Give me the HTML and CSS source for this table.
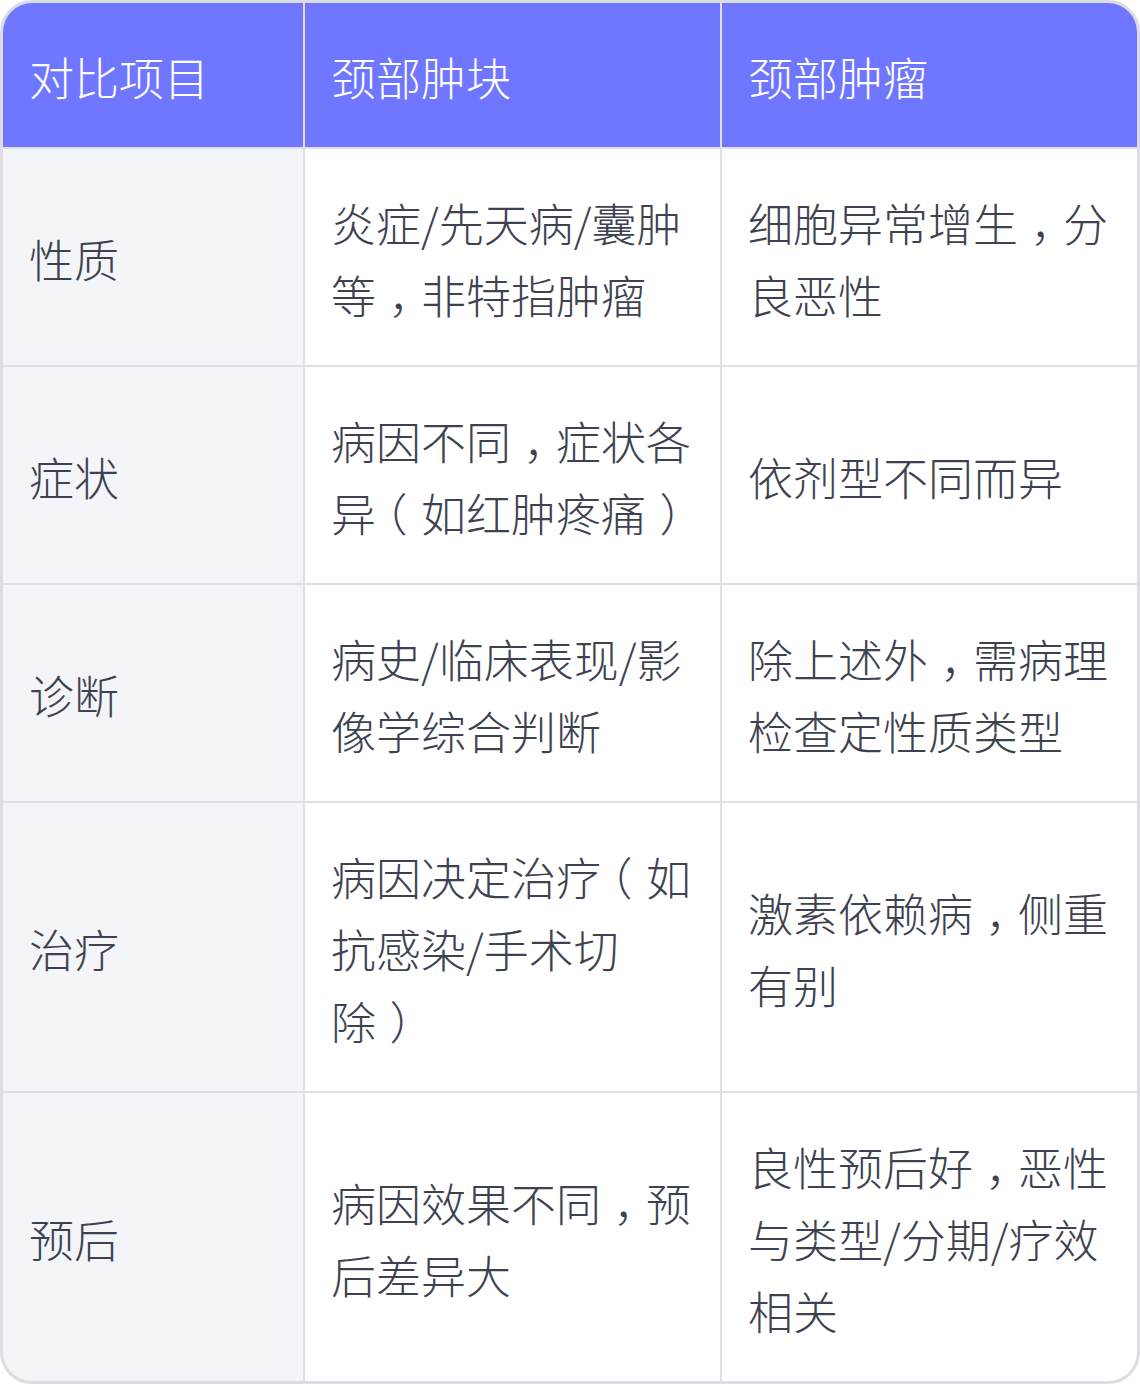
FILE: index.html
```html
<!DOCTYPE html>
<html lang="zh-CN">
<head>
<meta charset="utf-8">
<title>颈部肿块与颈部肿瘤对比</title>
<link rel="stylesheet" href="styles.css">
</head>
<body>
<div class="table">
  <div class="cell head">对比项目</div>
  <div class="cell head">颈部肿块</div>
  <div class="cell head">颈部肿瘤</div>

  <div class="cell label">性质</div>
  <div class="cell"><p class="txt">炎症/先天病/囊肿等<span class="cm">，</span>非特指肿瘤</p></div>
  <div class="cell"><p class="txt">细胞异常增生<span class="cm">，</span>分良恶性</p></div>

  <div class="cell label">症状</div>
  <div class="cell"><p class="txt">病因不同<span class="cm">，</span>症状各异<span class="lp">（</span>如红肿疼痛<span class="rp">）</span></p></div>
  <div class="cell"><p class="txt">依剂型不同而异</p></div>

  <div class="cell label">诊断</div>
  <div class="cell"><p class="txt">病史/临床表现/影像学综合判断</p></div>
  <div class="cell"><p class="txt">除上述外<span class="cm">，</span>需病理检查定性质类型</p></div>

  <div class="cell label">治疗</div>
  <div class="cell"><p class="txt">病因决定治疗<span class="lp">（</span>如抗感染/手术切除<span class="rp">）</span></p></div>
  <div class="cell"><p class="txt">激素依赖病<span class="cm">，</span>侧重有别</p></div>

  <div class="cell label">预后</div>
  <div class="cell"><p class="txt">病因效果不同<span class="cm">，</span>预后差异大</p></div>
  <div class="cell"><p class="txt">良性预后好<span class="cm">，</span>恶性与类型/分期/疗效相关</p></div>
</div>
</body>
</html>
```

FILE: styles.css
```css
html, body {
  margin: 0;
  padding: 0;
  background: #ffffff;
}

.table {
  box-sizing: border-box;
  width: 1140px;
  height: 1384px;
  display: grid;
  grid-template-columns: 300px 415px 415px;
  grid-template-rows: 144px 216px 216px 216px 288px 288px;
  gap: 2px;
  background: #dfdfe5;
  border: 3px solid #dcdce2;
  border-radius: 32px;
  overflow: hidden;
  font-family: "Noto Sans CJK SC", "Noto Sans", sans-serif;
  font-weight: 300;
  font-size: 45px;
  line-height: 72px;
  color: #3e4250;
  text-spacing-trim: space-all;
}

.cell {
  box-sizing: border-box;
  background: #ffffff;
  padding: 3px 14px 0 26px;
  display: flex;
  align-items: center;
  word-break: break-all;
}

.txt {
  margin: 0;
}

/* full-width punctuation drawn centred in its em box */
.cm {
  margin-left: 0.28em;
  margin-right: -0.28em;
}

.lp {
  margin-left: -0.3em;
  margin-right: 0.3em;
}

.rp {
  margin-left: 0.3em;
  margin-right: -0.3em;
}

.head {
  background: #6f76ff;
  color: #ffffff;
}

.label {
  background: #f4f5f9;
}
```
